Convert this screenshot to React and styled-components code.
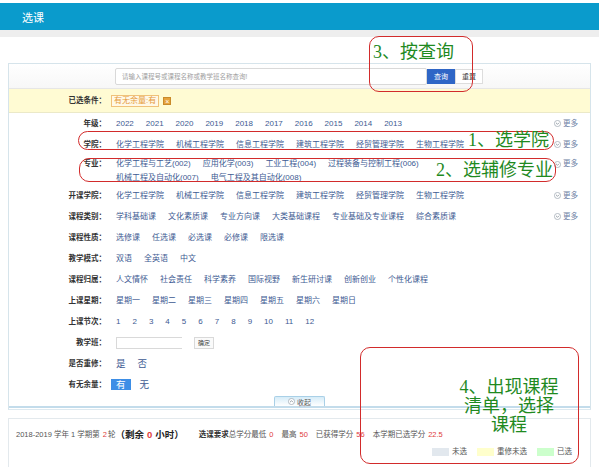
import React from 'react';
import styled, { createGlobalStyle } from 'styled-components';

const GlobalStyle = createGlobalStyle`
  html, body {
    margin: 0;
    padding: 0;
    background: #ffffff;
  }
  body {
    font-family: "Liberation Sans", "Noto Sans CJK SC", sans-serif;
    color: #333333;
  }
  * {
    box-sizing: border-box;
  }
`;

const Page = styled.div`
  position: relative;
  width: 599px;
  height: 467px;
  overflow: hidden;
  padding-top: 3px;
`;

const Header = styled.div`
  height: 27px;
  background: #0a9bcc;
  color: #ffffff;
  font-size: 11px;
  padding-left: 22px;
  display: flex;
  align-items: center;
`;

const SubBar = styled.div`
  height: 7px;
  background: #eeeeee;
`;

const Panel = styled.div`
  margin: 26px 8px 0 8px;
  border: 1px solid #d6e4eb;
  border-bottom: 1px solid #dde9f0;
  padding-bottom: 1px;
`;

const SearchBar = styled.div`
  height: 25px;
  display: flex;
  align-items: center;
  padding-left: 106px;
  background: linear-gradient(#ffffff, #f7f7f7);
  border-bottom: 1px solid #e6e6e6;
`;

const SearchInput = styled.input`
  width: 312px;
  height: 17px;
  border: 1px solid #d9d9d9;
  border-radius: 2px;
  padding: 0 6px;
  font-size: 6.5px;
  font-family: inherit;
  outline: none;
  &::placeholder {
    color: #a0a0a0;
  }
`;

const Button = styled.button`
  width: 28px;
  height: 15px;
  padding: 0;
  font-size: 7px;
  font-family: inherit;
  border: 1px solid ${p => (p.primary ? '#2f66c6' : '#dddddd')};
  background: ${p => (p.primary ? '#2f66c6' : '#ffffff')};
  color: ${p => (p.primary ? '#ffffff' : '#444444')};
`;

const FilterBar = styled.div`
  height: 24px;
  display: flex;
  align-items: center;
  background: #fffbd3;
  border-bottom: 1px solid #ebe9c8;
`;

const Label = styled.div`
  width: 97px;
  flex-shrink: 0;
  text-align: right;
  font-size: 7.5px;
  font-weight: bold;
  line-height: 14px;
  color: #333333;
`;

const Tag = styled.span`
  margin-left: 5px;
  padding: 0 2px;
  font-size: 8px;
  line-height: 10px;
  color: #e59a3a;
  border: 1px solid #f0c27a;
  background: #fff8e6;
`;

const TagClose = styled.span`
  margin-left: 4px;
  width: 8px;
  height: 8px;
  background: #e6a23c;
  color: #ffffff;
  font-size: 7px;
  line-height: 8px;
  text-align: center;
  border: 1px solid #c98a2a;
`;

const Row = styled.div`
  display: flex;
  align-items: flex-start;
  padding: ${p => (p.tight ? '2px 0 0' : '3.5px 0')};
  line-height: 14px;
`;

const Values = styled.div`
  margin-left: 10px;
  width: 372px;
  display: flex;
  flex-wrap: wrap;
  column-gap: 12px;
  font-size: ${p => (p.large ? '9.5px' : '8px')};
  color: #3d5a92;
`;

const Item = styled.span`
  white-space: nowrap;
  ${p =>
    p.active &&
    `
    background: #3d8ee6;
    color: #ffffff;
    padding: 0 5px;
    margin-left: -5px;
    margin-right: -3px;
    line-height: 11px;
    margin-top: 1.5px;
    height: 11px;
  `}
`;

const More = styled.div`
  margin-left: auto;
  padding-right: 12px;
  display: flex;
  align-items: center;
  gap: 2px;
  font-size: 7.5px;
  color: #6d7fa5;
`;

const ClassInput = styled.input`
  width: 66px;
  height: 12px;
  margin-top: 1px;
  border: 1px solid #d9d9d9;
  border-right: none;
  outline: none;
`;

const SmallButton = styled.button`
  width: 20px;
  height: 12px;
  margin-top: 1px;
  padding: 0;
  font-size: 6px;
  font-family: inherit;
  border: 1px solid #d9d9d9;
  background: #fafafa;
  color: #444444;
`;

const CollapseBar = styled.div`
  margin-top: 1px;
  display: flex;
  justify-content: center;
  border-bottom: 2px solid #c3dceb;
`;

const CollapseTab = styled.div`
  width: 51px;
  height: 10px;
  display: flex;
  align-items: center;
  justify-content: center;
  gap: 2px;
  font-size: 7px;
  color: #555555;
  background: linear-gradient(#d6ecf8, #ffffff);
  border: 1px solid #a9d0e7;
  border-bottom: none;
  border-radius: 2px 2px 0 0;
`;

const InfoPanel = styled.div`
  margin: 8px 8px 0 8px;
  height: 60px;
  border: 1px solid #e3e9ed;
  border-bottom: none;
  padding: 9px 18px 0 7px;
`;

const Summary = styled.div`
  display: flex;
  align-items: center;
  line-height: 14px;
  font-size: 7.5px;
  color: #555555;
  white-space: nowrap;
`;

const Strong = styled.span`
  font-size: 9.5px;
  font-weight: bold;
  color: #222222;
`;

const Num = styled.span`
  color: #e03c3c;
  margin: 0 ${p => p.gap || 3}px 0 3px;
  font-weight: ${p => (p.bold ? 'bold' : 'normal')};
`;

const Requirement = styled.span`
  margin-left: 15px;
  font-weight: bold;
  color: #333333;
`;

const Legend = styled.div`
  margin-top: 4px;
  display: flex;
  justify-content: flex-end;
  align-items: center;
  gap: 10px;
  font-size: 7.5px;
  line-height: 12px;
  color: #555555;
`;

const LegendItem = styled.div`
  display: flex;
  align-items: center;
  gap: 3px;
`;

const Swatch = styled.span`
  width: 17px;
  height: 8px;
  background: ${p => p.color};
`;

const Callout = styled.div`
  position: absolute;
  border: 1px solid #d22b2b;
  border-radius: 10px;
  display: flex;
  align-items: ${p => p.align || 'center'};
  justify-content: ${p => p.justify || 'flex-end'};
  padding: ${p => p.pad || '0 4px'};
`;

const CalloutText = styled.div`
  font-family: "Liberation Serif", "Noto Sans CJK SC", serif;
  font-size: 18px;
  line-height: 19px;
  color: #1f8a1f;
  text-align: center;
  white-space: nowrap;
`;

const Chevron = ({ up }) => (
  <svg width="7" height="7" viewBox="0 0 8 8">
    <circle cx="4" cy="4" r="3.5" fill="#ffffff" stroke="#9aa4ad" strokeWidth="0.8" />
    <path d={up ? 'M2.3 4.8 L4 3.1 L5.7 4.8' : 'M2.3 3.2 L4 4.9 L5.7 3.2'} fill="none" stroke="#7d8891" strokeWidth="0.9" />
  </svg>
);

const rows = [
  { label: '年级', more: true, items: ['2022', '2021', '2020', '2019', '2018', '2017', '2016', '2015', '2014', '2013'] },
  { label: '学院', more: true, items: ['化学工程学院', '机械工程学院', '信息工程学院', '建筑工程学院', '经贸管理学院', '生物工程学院'] },
  {
    label: '专业',
    more: true,
    tight: true,
    items: ['化学工程与工艺(002)', '应用化学(003)', '工业工程(004)', '过程装备与控制工程(006)', '机械工程及自动化(007)', '电气工程及其自动化(008)'],
  },
  { label: '开课学院', more: true, items: ['化学工程学院', '机械工程学院', '信息工程学院', '建筑工程学院', '经贸管理学院', '生物工程学院'] },
  { label: '课程类别', more: true, items: ['学科基础课', '文化素质课', '专业方向课', '大类基础课程', '专业基础及专业课程', '综合素质课'] },
  { label: '课程性质', items: ['选修课', '任选课', '必选课', '必修课', '限选课'] },
  { label: '教学模式', items: ['双语', '全英语', '中文'] },
  { label: '课程归属', items: ['人文情怀', '社会责任', '科学素养', '国际视野', '新生研讨课', '创新创业', '个性化课程'] },
  { label: '上课星期', items: ['星期一', '星期二', '星期三', '星期四', '星期五', '星期六', '星期日'] },
  { label: '上课节次', items: ['1', '2', '3', '4', '5', '6', '7', '8', '9', '10', '11', '12'] },
  { label: '教学班', input: true },
  { label: '是否重修', large: true, items: ['是', '否'] },
  { label: '有无余量', large: true, items: ['有', '无'], active: '有' },
];

export default function App() {
  return (
    <Page>
      <GlobalStyle />
      <Header>选课</Header>
      <SubBar />
      <Panel>
        <SearchBar>
          <SearchInput placeholder="请输入课程号或课程名称或教学班名称查询!" />
          <Button primary>查询</Button>
          <Button>重置</Button>
        </SearchBar>
        <FilterBar>
          <Label>已选条件：</Label>
          <Tag>有无余量:有</Tag>
          <TagClose>×</TagClose>
        </FilterBar>
        {rows.map(row => (
          <Row key={row.label} tight={row.tight}>
            <Label>{row.label}：</Label>
            {row.input ? (
              <Values>
                <ClassInput />
                <SmallButton>确定</SmallButton>
              </Values>
            ) : (
              <Values large={row.large}>
                {row.items.map(it => (
                  <Item key={it} active={row.active === it}>
                    {it}
                  </Item>
                ))}
              </Values>
            )}
            {row.more && (
              <More>
                <Chevron />
                更多
              </More>
            )}
          </Row>
        ))}
        <CollapseBar>
          <CollapseTab>
            <Chevron up />
            收起
          </CollapseTab>
        </CollapseBar>
      </Panel>
      <InfoPanel>
        <Summary>
          2018-2019 学年 1 学期第<Num gap={1}>2</Num>轮
          <Strong>
            （剩余<Num bold>0</Num>小时）
          </Strong>
          <Requirement>选课要求</Requirement>
          总学分最低<Num gap={8}>0</Num>
          最高<Num gap={8}>50</Num>
          已获得学分<Num gap={8}>56</Num>
          本学期已选学分<Num>22.5</Num>
        </Summary>
        <Legend>
          <LegendItem>
            <Swatch color="#e2e8ee" />
            未选
          </LegendItem>
          <LegendItem>
            <Swatch color="#ffffcc" />
            重修未选
          </LegendItem>
          <LegendItem>
            <Swatch color="#ccffcc" />
            已选
          </LegendItem>
        </Legend>
      </InfoPanel>

      <Callout style={{ left: 369, top: 36, width: 104, height: 56 }} align="flex-start" justify="flex-start" pad="6px 3px">
        <CalloutText>3、按查询</CalloutText>
      </Callout>
      <Callout style={{ left: 78, top: 131, width: 476, height: 19 }}>
        <CalloutText>1、选学院</CalloutText>
      </Callout>
      <Callout style={{ left: 79, top: 158, width: 477, height: 24 }} pad="0 2px">
        <CalloutText>2、选辅修专业</CalloutText>
      </Callout>
      <Callout style={{ left: 360, top: 347, width: 219, height: 117 }} align="flex-start" justify="center" pad="30px 0 0 79px">
        <CalloutText>
          4、出现课程
          <br />
          清单，选择
          <br />
          课程
        </CalloutText>
      </Callout>
    </Page>
  );
}
